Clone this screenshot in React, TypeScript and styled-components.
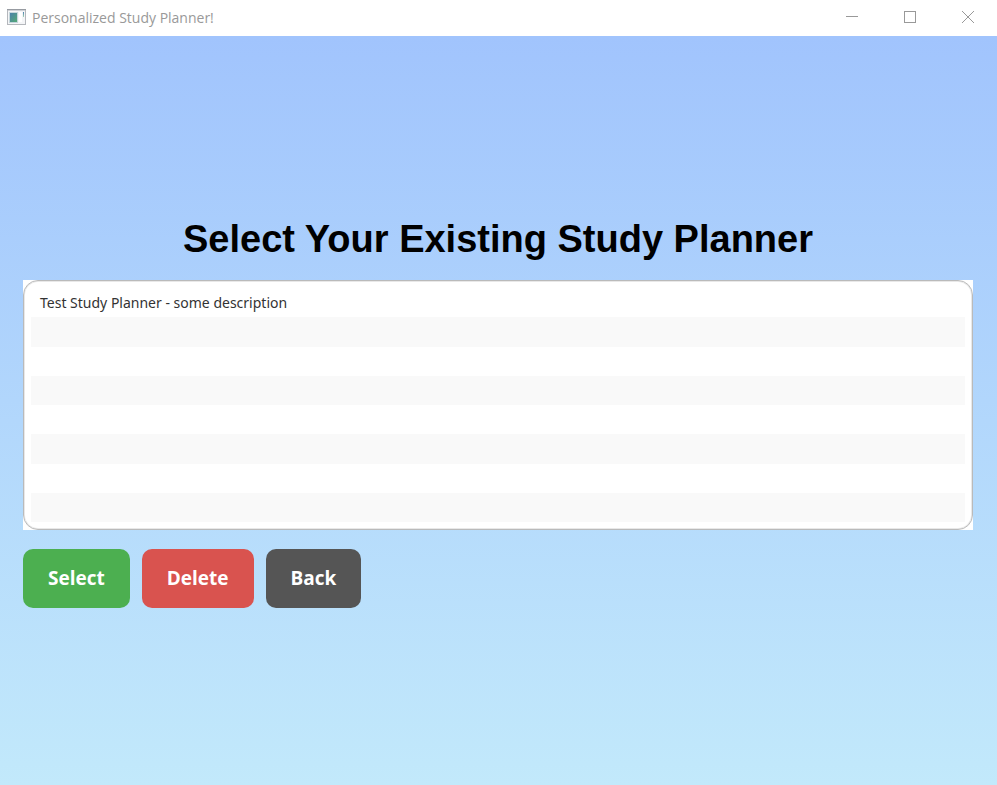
import React, { useState } from "react";
import styled, { createGlobalStyle, css } from "styled-components";

const GlobalStyle = createGlobalStyle`
  *, *::before, *::after { box-sizing: border-box; }
  body { margin: 0; font-family: "Segoe UI", "Open Sans", "Noto Sans", sans-serif; }
`;

const Window = styled.div`
  min-height: 100vh;
  display: flex;
  flex-direction: column;
`;

const TitleBar = styled.header`
  height: 36px;
  display: flex;
  align-items: center;
  justify-content: space-between;
  padding-left: 7px;
  background: #ffffff;
`;

const WindowTitle = styled.div`
  display: flex;
  align-items: center;
  gap: 5px;
  color: #999999;
  font-family: "Segoe UI", "Open Sans", sans-serif;
  font-size: 14px;
  line-height: 20px;
  white-space: nowrap;
`;

const WindowControls = styled.div`
  display: flex;
`;

const ControlButton = styled.button`
  width: 58px;
  height: 36px;
  padding: 0 0 2px;
  display: flex;
  align-items: center;
  justify-content: center;
  border: 0;
  background: transparent;
  color: #999999;
`;

const Content = styled.main`
  flex: 1;
  display: flex;
  flex-direction: column;
  justify-content: center;
  padding: 0 24px 0 23px;
  background: linear-gradient(to bottom, #a1c4fd, #c2e9fb);
`;

const Heading = styled.h1`
  margin: 0 0 15px;
  color: #000000;
  font-family: Arial, "Liberation Sans", sans-serif;
  font-size: 38px;
  line-height: 52px;
  font-weight: 700;
  text-align: center;
`;

const ListFrame = styled.div`
  background: #ffffff;
`;

const PlannerList = styled.div`
  height: 250px;
  padding: 7px;
  display: grid;
  grid-template-rows: repeat(8, 1fr);
  border: 1px solid #bababa;
  border-radius: 15px;
  background: #ffffff;
  box-shadow: inset 0 0 0 1px #e8e8e8;
`;

const rowStyle = css`
  background: #ffffff;
  &:nth-child(even) { background: #f9f9f9; }
`;

const EmptyRow = styled.div`
  ${rowStyle}
`;

const PlannerRow = styled.button`
  ${rowStyle}
  display: flex;
  align-items: center;
  padding: 0 9px;
  border: 0;
  color: #333333;
  font-family: "Segoe UI", "Noto Sans", sans-serif;
  font-size: 14px;
  line-height: 20px;
  text-align: left;
`;

const Actions = styled.div`
  display: flex;
  gap: 12px;
  margin-top: 19px;
`;

const ActionButton = styled.button<{ $color: string }>`
  height: 59px;
  padding: 0 25px 2px;
  border: 0;
  border-radius: 10px;
  background: ${({ $color }) => $color};
  color: #ffffff;
  font-family: "Segoe UI", "Open Sans", sans-serif;
  font-size: 19px;
  line-height: 26px;
  font-weight: 700;
`;

const AppIcon = () => (
  <svg width="20" height="18" viewBox="0 0 20 18" aria-hidden="true">
    <defs>
      <linearGradient id="screen" x1="0" y1="0" x2="1" y2="1">
        <stop offset="0" stopColor="#4a7fae" />
        <stop offset="1" stopColor="#55ab72" />
      </linearGradient>
      <linearGradient id="gauge" x1="0" y1="0" x2="0" y2="1">
        <stop offset="0" stopColor="#4a7fae" />
        <stop offset="1" stopColor="#a5d3b4" />
      </linearGradient>
    </defs>
    <rect x="0.5" y="0.5" width="18" height="15" fill="#f4f5f7" stroke="#b4b7bc" />
    <path d="M0 0.5h19" stroke="#979ba1" />
    <path d="M1 1.5h17" stroke="#cfd1d6" />
    <rect x="2.5" y="3.5" width="8" height="10" fill="url(#screen)" stroke="#c5d6dc" />
    <rect x="12" y="3" width="3" height="10" fill="#ffffff" />
    <rect x="16" y="3" width="1" height="5" fill="url(#gauge)" />
  </svg>
);

const planners = ["Test Study Planner - some description"];
const emptyRows = [1, 2, 3, 4, 5, 6, 7];

export default function App() {
  const [selected, setSelected] = useState(-1);
  return (
    <>
      <GlobalStyle />
      <Window>
        <TitleBar>
          <WindowTitle>
            <AppIcon />
            Personalized Study Planner!
          </WindowTitle>
          <WindowControls>
            <ControlButton aria-label="Minimize">
              <svg width="12" height="12" viewBox="0 0 12 12" stroke="currentColor">
                <path d="M0 5.5h12" />
              </svg>
            </ControlButton>
            <ControlButton aria-label="Maximize">
              <svg width="12" height="12" viewBox="0 0 12 12" fill="none" stroke="currentColor">
                <rect x="0.5" y="0.5" width="11" height="11" />
              </svg>
            </ControlButton>
            <ControlButton aria-label="Close">
              <svg width="12" height="12" viewBox="0 0 12 12" stroke="currentColor">
                <path d="M0 0l12 12M12 0L0 12" />
              </svg>
            </ControlButton>
          </WindowControls>
        </TitleBar>
        <Content>
          <Heading>Select Your Existing Study Planner</Heading>
          <ListFrame>
            <PlannerList>
              {planners.map((name, index) => (
                <PlannerRow
                  key={name}
                  aria-pressed={selected === index}
                  onClick={() => setSelected(index)}
                >
                  {name}
                </PlannerRow>
              ))}
              {emptyRows.map((row) => (
                <EmptyRow key={row} />
              ))}
            </PlannerList>
          </ListFrame>
          <Actions>
            <ActionButton $color="#4caf50">Select</ActionButton>
            <ActionButton $color="#d9534f">Delete</ActionButton>
            <ActionButton $color="#555555">Back</ActionButton>
          </Actions>
        </Content>
      </Window>
    </>
  );
}
